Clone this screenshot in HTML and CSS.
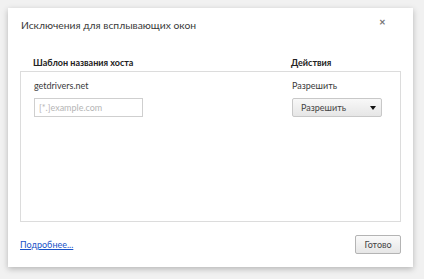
FILE: index.html
```html
<!DOCTYPE html>
<html lang="ru">
<head>
  <meta charset="UTF-8">
  <title>Исключения для всплывающих окон</title>
  <link rel="stylesheet" href="styles.css">
</head>
<body>
  <div class="page">
    <div class="dialog">
      <div class="title-row">
        <h1>Исключения для всплывающих окон</h1>
        <span class="close">&#x2715;</span>
      </div>

      <div class="cols head">
        <span>Шаблон названия хоста</span>
        <span>Действия</span>
      </div>

      <div class="list">
        <div class="cols row">
          <span>getdrivers.net</span>
          <span>Разрешить</span>
        </div>
        <div class="cols row">
          <input type="text" placeholder="[*.]example.com">
          <div class="select">
            <span>Разрешить</span>
            <span class="arrow"></span>
          </div>
        </div>
      </div>

      <div class="footer">
        <a href="#">Подробнее...</a>
        <button>Готово</button>
      </div>
    </div>
  </div>
</body>
</html>
```

FILE: styles.css
```css
body {
  margin: 0;
  background: #f1f1f1;
  font-family: Lato, "Open Sans", sans-serif;
  color: #333;
}
.page {
  padding: 8px 0 0 8px;
  height: 271px;
}
.dialog {
  width: 381px;
  height: 252px;
  padding: 7px 12px 0 12px;
  background: #fff;
  box-shadow: 0 2px 6px rgba(0, 0, 0, 0.25);
  display: flex;
  flex-direction: column;
}
.title-row {
  display: flex;
  justify-content: space-between;
  align-items: center;
  height: 20px;
}
h1 {
  margin: 0 0 0 1px;
  font-size: 10.3px;
  font-weight: normal;
  color: #3a3a3a;
}
.close {
  font-size: 8px;
  font-weight: bold;
  color: #777;
  margin-right: 15px;
  margin-top: -7px;
}
.cols {
  display: grid;
  grid-template-columns: 258px 1fr;
  padding-left: 13px;
  font-size: 9px;
  align-items: center;
}
.head {
  margin-top: 20px;
  height: 14px;
  font-weight: bold;
  font-size: 9px;
  color: #222;
}
.list {
  margin-top: 2px;
  height: 143px;
  border: 1px solid #dcdcdc;
  padding-top: 6px;
}
.row {
  height: 14px;
  color: #3a3a3a;
}
.row + .row {
  margin-top: 6px;
  height: 19px;
}
input {
  width: 109px;
  height: 19px;
  box-sizing: border-box;
  border: 1px solid #cfcfcf;
  padding: 0 4px;
  font-family: inherit;
  font-size: 9px;
  color: #333;
}
input::placeholder {
  color: #b5b5b5;
}
.select {
  width: 90px;
  height: 19px;
  box-sizing: border-box;
  border: 1px solid #c8c8c8;
  border-radius: 2px;
  background: linear-gradient(#f8f8f8, #e6e6e6);
  display: flex;
  align-items: center;
  justify-content: space-between;
  padding: 0 5px 0 8px;
  color: #444;
}
.arrow {
  width: 0;
  height: 0;
  border-left: 3.5px solid transparent;
  border-right: 3.5px solid transparent;
  border-top: 4px solid #111;
}
.footer {
  flex: 1;
  display: flex;
  justify-content: space-between;
  align-items: center;
  padding-bottom: 1px;
}
a {
  font-size: 9px;
  color: #1a53c8;
}
button {
  width: 46px;
  height: 19px;
  border: 1px solid #b4b4b4;
  border-radius: 2px;
  background: linear-gradient(#fafafa, #e6e6e6);
  font-family: inherit;
  font-size: 9px;
  color: #444;
  padding: 0;
}
```
